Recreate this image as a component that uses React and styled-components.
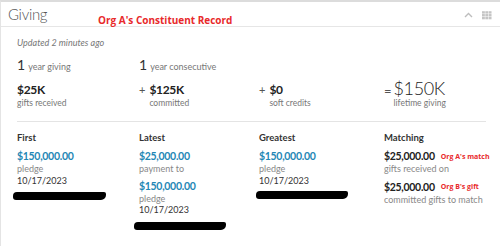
import React from "react";
import styled, { createGlobalStyle } from "styled-components";

const GlobalStyle = createGlobalStyle`
  html, body {
    margin: 0;
    padding: 0;
    background: #ffffff;
  }
  body {
    font-family: "Lato", "Open Sans", sans-serif;
    color: #333333;
  }
`;

const Card = styled.div`
  position: relative;
  width: 500px;
  height: 246px;
  box-sizing: border-box;
  border-top: 2px solid #dcdcdc;
  border-left: 1px solid #e4e4e4;
  background: #ffffff;
  overflow: hidden;
`;

const Header = styled.div`
  position: relative;
  display: flex;
  align-items: center;
  justify-content: space-between;
  height: 24px;
  padding: 0 8px 0 7px;
  border-bottom: 1px solid #e6e6e6;
  h1 {
    margin: 0;
    font-size: 15px;
    font-weight: 300;
    color: #555555;
    letter-spacing: -0.3px;
  }
`;

const Annotation = styled.span`
  position: absolute;
  left: ${(props) => props.left};
  top: ${(props) => props.top};
  font-family: "Open Sans", sans-serif;
  font-size: ${(props) => props.size || "9px"};
  font-weight: 700;
  color: #e8292b;
  white-space: nowrap;
`;

const Tools = styled.div`
  display: flex;
  align-items: center;
  gap: 9px;
  margin-top: 2px;
`;

const Body = styled.div`
  padding: 10px 14px 0 16px;
`;

const Updated = styled.div`
  font-size: 9px;
  font-style: italic;
  color: #777777;
  margin-bottom: 8px;
`;

const Row = styled.div`
  display: grid;
  grid-template-columns: 122px 120px 125px 1fr;
  align-items: start;
  margin-top: ${(props) => props.top || "0"};
`;

const YearCell = styled.div`
  display: flex;
  align-items: baseline;
  gap: 3px;
  font-size: 9px;
  color: #777777;
  b {
    font-size: 14px;
    font-weight: 400;
    color: #333333;
  }
`;

const StatCell = styled.div`
  display: flex;
  align-items: flex-start;
  gap: ${(props) => (props.tight ? "2px" : "4px")};
`;

const Op = styled.span`
  font-size: ${(props) => (props.big ? "13px" : "11px")};
  color: #555555;
  line-height: ${(props) => (props.big ? "20px" : "17px")};
`;

const StatValue = styled.div`
  font-size: ${(props) => (props.big ? "18px" : "12px")};
  font-weight: ${(props) => (props.big ? 300 : 700)};
  color: #222222;
  line-height: ${(props) => (props.big ? "20px" : "17px")};
  letter-spacing: ${(props) => (props.big ? "-0.4px" : "-0.3px")};
`;

const StatLabel = styled.div`
  font-size: 8.5px;
  color: #777777;
  line-height: 11px;
`;

const Divider = styled.div`
  height: 1px;
  background: #e4e4e4;
  margin: 12px 0 10px 0;
`;

const Col = styled.div`
  display: flex;
  flex-direction: column;
  align-items: flex-start;
`;

const ColTitle = styled.div`
  font-size: 9.5px;
  font-weight: 700;
  color: #333333;
  margin-bottom: 5px;
  line-height: 12px;
`;

const Amount = styled.div`
  font-size: 10.5px;
  font-weight: 700;
  color: ${(props) => (props.dark ? "#222222" : "#1f87b5")};
  line-height: 14px;
  letter-spacing: -0.3px;
`;

const Sub = styled.div`
  font-size: 9px;
  color: ${(props) => (props.dark ? "#333333" : "#888888")};
  line-height: 11.5px;
  margin-bottom: ${(props) => props.gap || "0"};
`;

const Redact = styled.div`
  width: ${(props) => props.w};
  height: 8px;
  margin: ${(props) => props.m};
  background: #000000;
  border-radius: 4px 2px 5px 3px;
`;

const MatchLine = styled.div`
  display: flex;
  align-items: center;
  gap: 6px;
  white-space: nowrap;
`;

const MatchTag = styled.span`
  font-family: "Open Sans", sans-serif;
  font-size: 7px;
  font-weight: 700;
  color: #e8292b;
  white-space: nowrap;
`;

function ChevronUp() {
  return (
    <svg width="9" height="6" viewBox="0 0 9 6">
      <path d="M1 5 L4.5 1.5 L8 5" fill="none" stroke="#bdbdbd" strokeWidth="1.4" />
    </svg>
  );
}

function GridIcon() {
  const cells = [];
  for (let r = 0; r < 3; r++) {
    for (let c = 0; c < 3; c++) {
      cells.push(<rect key={r * 3 + c} x={c * 3.5} y={r * 3} width="3" height="2.5" fill="#c4c4c4" />);
    }
  }
  return (
    <svg width="10" height="9" viewBox="0 0 10.5 9">
      {cells}
    </svg>
  );
}

export default function App() {
  return (
    <>
      <GlobalStyle />
      <Card>
        <Header>
          <h1>Giving</h1>
          <Tools>
            <ChevronUp />
            <GridIcon />
          </Tools>
          <Annotation left="97px" top="11px" size="10px">
            Org A's Constituent Record
          </Annotation>
        </Header>
        <Body>
          <Updated>Updated 2 minutes ago</Updated>
          <Row>
            <YearCell>
              <b>1</b> year giving
            </YearCell>
            <YearCell>
              <b>1</b> year consecutive
            </YearCell>
          </Row>
          <Row top="8px">
            <StatCell>
              <div>
                <StatValue>$25K</StatValue>
                <StatLabel>gifts received</StatLabel>
              </div>
            </StatCell>
            <StatCell>
              <Op>+</Op>
              <div>
                <StatValue>$125K</StatValue>
                <StatLabel>committed</StatLabel>
              </div>
            </StatCell>
            <StatCell>
              <Op>+</Op>
              <div>
                <StatValue>$0</StatValue>
                <StatLabel>soft credits</StatLabel>
              </div>
            </StatCell>
            <StatCell tight>
              <Op big>=</Op>
              <div style={{ marginTop: "-3px" }}>
                <StatValue big>$150K</StatValue>
                <StatLabel>lifetime giving</StatLabel>
              </div>
            </StatCell>
          </Row>
          <Divider />
          <Row>
            <Col>
              <ColTitle>First</ColTitle>
              <Amount>$150,000.00</Amount>
              <Sub>pledge</Sub>
              <Sub dark>10/17/2023</Sub>
              <Redact w="93px" m="6px 0 0 -4px" />
            </Col>
            <Col>
              <ColTitle>Latest</ColTitle>
              <Amount>$25,000.00</Amount>
              <Sub gap="4px">payment to</Sub>
              <Amount>$150,000.00</Amount>
              <Sub>pledge</Sub>
              <Sub dark>10/17/2023</Sub>
              <Redact w="92px" m="6px 0 0 -5px" />
            </Col>
            <Col>
              <ColTitle>Greatest</ColTitle>
              <Amount>$150,000.00</Amount>
              <Sub>pledge</Sub>
              <Sub dark>10/17/2023</Sub>
              <Redact w="92px" m="5px 0 0 -3px" />
            </Col>
            <Col>
              <ColTitle>Matching</ColTitle>
              <MatchLine>
                <Amount dark>$25,000.00</Amount>
                <MatchTag>Org A's match</MatchTag>
              </MatchLine>
              <Sub gap="5px">gifts received on</Sub>
              <MatchLine>
                <Amount dark>$25,000.00</Amount>
                <MatchTag>Org B's gift</MatchTag>
              </MatchLine>
              <Sub>committed gifts to match</Sub>
            </Col>
          </Row>
        </Body>
      </Card>
    </>
  );
}
